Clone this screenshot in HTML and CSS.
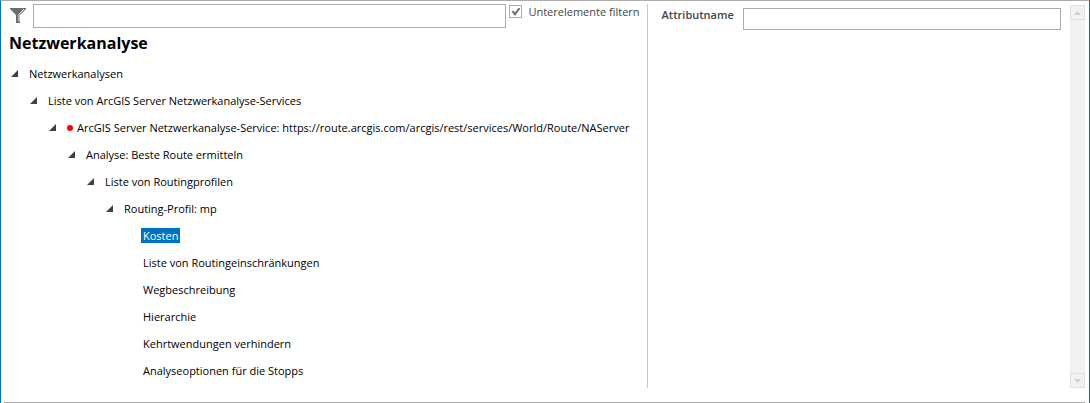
FILE: index.html
```html
<!DOCTYPE html>
<html lang="de">
<head>
  <meta charset="UTF-8" />
  <title>Netzwerkanalyse</title>
  <link rel="stylesheet" href="styles.css">
</head>
<body>

  <div class="window">
    <div class="panes">
      <section class="tree-pane">
        <div class="filter-bar">
          <svg class="funnel" width="16" height="16" viewBox="0 0 16 16" aria-hidden="true">
            <path d="M0 0H16V1L10 7V15H6V7L0 1Z" fill="#6d6d6d" />
            <path d="M14 1L9 6.5V13.5" fill="none" stroke="#fff" stroke-width="1" />
          </svg>
          <input type="text" class="filter-input" aria-label="Filter" />
          <label class="check">
            <input type="checkbox" id="filterChildren" checked />
            <span>Unterelemente filtern</span>
          </label>
        </div>

        <h1>Netzwerkanalyse</h1>

        <ul class="tree">
          <li>
            <div class="node"><span class="arrow"></span>Netzwerkanalysen</div>
            <ul>
              <li>
                <div class="node"><span class="arrow"></span>Liste von ArcGIS Server Netzwerkanalyse-Services</div>
                <ul>
                  <li>
                    <div class="node"><span class="arrow"></span><span class="dot"></span>ArcGIS Server Netzwerkanalyse-Service: https://route.arcgis.com/arcgis/rest/services/World/Route/NAServer</div>
                    <ul>
                      <li>
                        <div class="node"><span class="arrow"></span>Analyse: Beste Route ermitteln</div>
                        <ul>
                          <li>
                            <div class="node"><span class="arrow"></span>Liste von Routingprofilen</div>
                            <ul>
                              <li>
                                <div class="node"><span class="arrow"></span>Routing-Profil: mp</div>
                                <ul>
                                  <li><div class="node leaf"><span class="selected">Kosten</span></div></li>
                                  <li><div class="node leaf">Liste von Routingeinschränkungen</div></li>
                                  <li><div class="node leaf">Wegbeschreibung</div></li>
                                  <li><div class="node leaf">Hierarchie</div></li>
                                  <li><div class="node leaf">Kehrtwendungen verhindern</div></li>
                                  <li><div class="node leaf">Analyseoptionen für die Stopps</div></li>
                                </ul>
                              </li>
                            </ul>
                          </li>
                        </ul>
                      </li>
                    </ul>
                  </li>
                </ul>
              </li>
            </ul>
          </li>
        </ul>
      </section>

      <section class="detail-pane">
        <label for="attrName">Attributname</label>
        <input type="text" id="attrName" />
      </section>

      <div class="scrollbar">
        <button type="button" aria-label="Nach oben" disabled>
          <svg width="7" height="4" viewBox="0 0 7 4"><path d="M0 4L3.5 0L7 4Z" fill="#d0d0d0" /></svg>
        </button>
        <button type="button" aria-label="Nach unten" disabled>
          <svg width="7" height="4" viewBox="0 0 7 4"><path d="M0 0H7L3.5 4Z" fill="#d0d0d0" /></svg>
        </button>
      </div>
    </div>
  </div>

</body>
</html>
```

FILE: styles.css
```css
* {
  box-sizing: border-box;
}
body {
  margin: 0;
  background-color: #fff;
  color: #000;
  font-family: "Open Sans", "Noto Sans", sans-serif;
  font-size: 11px;
}
.window {
  display: flex;
  min-height: 100vh;
  padding: 3px 4px 0 3px;
  border-top: 1px solid #ababab;
  border-left: 1px solid #0072c6;
  border-right: 1px solid #0072c6;
}
.panes {
  display: flex;
  flex: 1;
  padding-bottom: 14px;
  border-bottom: 1px solid #ababab;
}
.tree-pane {
  flex: 0 0 calc(60% - 5px);
  padding-left: 5px;
  border-right: 1px solid #c6c6c6;
  white-space: nowrap;
}
input[type="text"] {
  border: 1px solid #ababab;
  background-color: #fff;
  padding: 0 4px;
  font: inherit;
}
.filter-bar {
  display: flex;
  align-items: flex-start;
  padding-right: 7px;
}
.funnel {
  margin: 4px 7px 0 1px;
}
.filter-input {
  flex: 1;
  min-width: 0;
  height: 24px;
}
.check {
  display: flex;
  align-items: center;
  gap: 6px;
  height: 15px;
  margin-left: 3px;
  color: #444;
}
.check input {
  appearance: none;
  width: 13px;
  height: 13px;
  margin: 0;
  border: 1px solid #ababab;
  display: grid;
  place-items: center;
}
.check input:checked::before {
  content: "";
  width: 9px;
  height: 8px;
  background-color: #777;
  clip-path: polygon(0 50%, 18% 36%, 40% 60%, 82% 0, 100% 12%, 45% 100%, 34% 100%);
}
h1 {
  margin: 4px 0 6px;
  font-size: 16px;
  line-height: 22px;
}
.tree,
.tree ul {
  list-style: none;
  margin: 0;
  padding: 0;
}
.tree ul {
  padding-left: 19px;
}
.node {
  display: flex;
  align-items: center;
  height: 27px;
  padding-left: 2px;
}
.arrow {
  width: 7px;
  height: 7px;
  margin-right: 11px;
  background-color: #404040;
  clip-path: polygon(100% 0, 100% 100%, 0 100%);
}
.dot {
  width: 6px;
  height: 6px;
  margin-right: 4px;
  border-radius: 50%;
  background-color: #f00;
}
.tree .leaf {
  padding-left: 20px;
}
.selected {
  margin-left: -2px;
  padding: 0 2px;
  line-height: 15px;
  background-color: #0072c6;
  color: #fff;
}
.detail-pane {
  display: flex;
  flex: 1;
  align-items: flex-start;
  gap: 9px;
  padding: 4px 9px 0 14px;
}
.detail-pane label {
  color: #444;
  font-weight: 600;
  line-height: 14px;
}
.detail-pane input {
  flex: 1;
  min-width: 0;
  height: 22px;
}
.scrollbar {
  display: flex;
  flex-direction: column;
  justify-content: space-between;
  width: 15px;
  margin-top: 1px;
  background-color: #f1f1f1;
}
.scrollbar button {
  display: grid;
  place-items: center;
  width: 15px;
  height: 15px;
  padding: 0;
  border: 1px solid #e1e1e1;
  background-color: #f1f1f1;
}
```
